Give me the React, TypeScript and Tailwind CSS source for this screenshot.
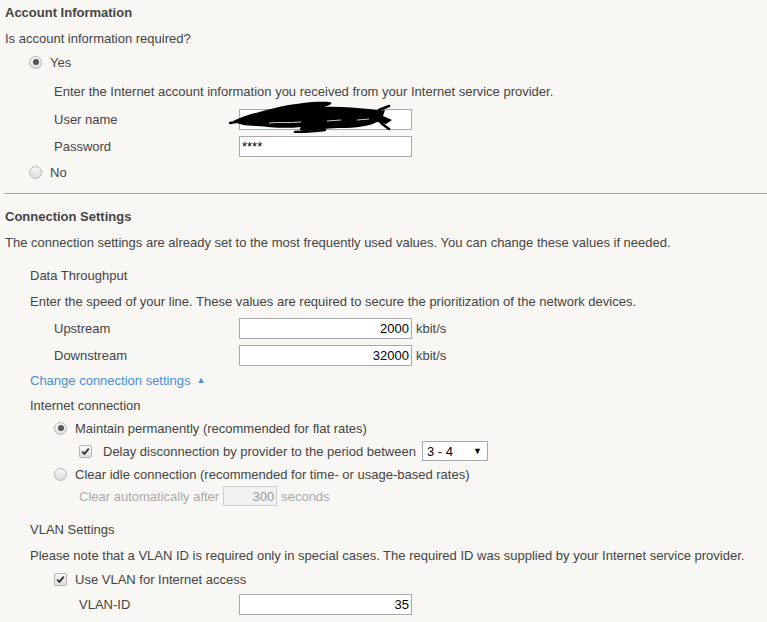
import React from "react";

function Radio({ checked }: { checked?: boolean }) {
  return (
    <span className="flex h-[13px] w-[13px] shrink-0 items-center justify-center rounded-full border border-[#b5b5b5] bg-gradient-to-b from-[#f7f7f7] to-[#dedede]">
      {checked && <span className="h-[6px] w-[6px] rounded-full bg-[#555]" />}
    </span>
  );
}

function Checkbox() {
  return (
    <span className="flex h-[13px] w-[13px] shrink-0 items-center justify-center rounded-[2px] border border-[#b5b5b5] bg-gradient-to-b from-[#f7f7f7] to-[#dedede]">
      <svg width="9" height="9" viewBox="0 0 9 9">
        <path d="M1.2 4.6 L3.4 6.8 L7.8 1.6" fill="none" stroke="#333" strokeWidth="1.8" />
      </svg>
    </span>
  );
}

function Box({
  value,
  right,
  className = "",
}: {
  value: string;
  right?: boolean;
  className?: string;
}) {
  return (
    <div
      className={`flex h-[21px] w-[173px] items-center border border-[#a9a9a9] bg-white px-[2px] text-[13px] text-black ${
        right ? "justify-end" : ""
      } ${className}`}
    >
      {value}
    </div>
  );
}

// redaction scribble over the user name
function Scribble() {
  return (
    <svg
      className="pointer-events-none absolute left-[-10px] top-[-8px]"
      width="166"
      height="32"
      viewBox="0 0 166 32"
    >
      <path
        d="M4 20 C16 14 34 10 50 6 C68 2 88 0 100 1 C106 2 100 5 94 6 C110 5 126 7 140 8 C148 9 152 10 156 9 L154 15 L163 19 L157 23 L148 21 C140 25 128 27 110 27 C96 27 84 30 76 30 C70 30 70 27 72 26 C55 28 40 26 28 25 C16 25 8 23 4 20 Z"
        fill="#000"
      />
      <path
        d="M1 22 C15 20 25 18 35 18 M150 9 L160 5 M152 22 L160 28 M66 31 C80 31 88 30 96 29"
        fill="none"
        stroke="#000"
        strokeWidth="2.5"
        strokeLinecap="round"
      />
      <path
        d="M40 22 C50 21 60 22 72 21 M98 20 L112 19 M128 19 L140 18"
        fill="none"
        stroke="#fff"
        strokeWidth="0.8"
      />
    </svg>
  );
}

export default function App() {
  return (
    <div
      className="h-[622px] w-[767px] overflow-hidden bg-[#f8f7f3] text-[13px] leading-none text-[#444]"
      style={{ fontFamily: '"Liberation Sans", Arial, sans-serif' }}
    >
      {/* Account Information */}
      <div className="mt-[2px] flex h-[20px] items-center pl-[5px] font-bold">Account Information</div>
      <div className="mt-[6px] flex h-[20px] items-center pl-[5px]">Is account information required?</div>
      <div className="mt-[4px] flex h-[20px] items-center gap-[8px] pl-[29px]">
        <Radio checked />
        <span>Yes</span>
      </div>
      <div className="mt-[9px] flex h-[20px] items-center pl-[54px]">
        Enter the Internet account information you received from your Internet service provider.
      </div>
      <div className="mt-[7px] flex h-[22px] items-center pl-[54px]">
        <span className="w-[185px]">User name</span>
        <div className="relative">
          <Box value="" />
          <Scribble />
        </div>
      </div>
      <div className="mt-[5px] flex h-[22px] items-center pl-[54px]">
        <span className="w-[185px]">Password</span>
        <Box value="****" className="text-[11px]" />
      </div>
      <div className="mt-[5px] flex h-[20px] items-center gap-[8px] pl-[29px]">
        <Radio />
        <span>No</span>
      </div>

      <div className="ml-[4px] mt-[11px] h-px bg-[#a0a0a0]" />

      {/* Connection Settings */}
      <div className="mt-[12px] flex h-[20px] items-center pl-[5px] font-bold">Connection Settings</div>
      <div className="mt-[6px] flex h-[20px] items-center pl-[5px]">
        The connection settings are already set to the most frequently used values. You can change these values if needed.
      </div>
      <div className="mt-[13px] flex h-[20px] items-center pl-[30px]">Data Throughput</div>
      <div className="mt-[6px] flex h-[20px] items-center pl-[30px]">
        Enter the speed of your line. These values are required to secure the prioritization of the network devices.
      </div>
      <div className="mt-[6px] flex h-[22px] items-center pl-[54px]">
        <span className="w-[185px]">Upstream</span>
        <Box value="2000" right />
        <span className="ml-[4px]">kbit/s</span>
      </div>
      <div className="mt-[5px] flex h-[22px] items-center pl-[54px]">
        <span className="w-[185px]">Downstream</span>
        <Box value="32000" right />
        <span className="ml-[4px]">kbit/s</span>
      </div>
      <div className="mt-[4px] flex h-[20px] items-center pl-[30px] text-[#4a8fd3]">
        Change connection settings
        <span className="ml-[6px] text-[9px]">▲</span>
      </div>
      <div className="mt-[5px] flex h-[20px] items-center pl-[30px]">Internet connection</div>
      <div className="mt-[3px] flex h-[20px] items-center gap-[8px] pl-[54px]">
        <Radio checked />
        <span>Maintain permanently (recommended for flat rates)</span>
      </div>
      <div className="mt-[3px] flex h-[20px] items-center pl-[79px]">
        <Checkbox />
        <span className="ml-[11px]">Delay disconnection by provider to the period between</span>
        <div className="ml-[6px] flex h-[20px] w-[66px] items-center justify-between border border-[#a9a9a9] bg-white pl-[4px] pr-[5px] text-black">
          <span>3 - 4</span>
          <span className="text-[9px]">▼</span>
        </div>
      </div>
      <div className="mt-[3px] flex h-[20px] items-center gap-[8px] pl-[54px]">
        <Radio />
        <span>Clear idle connection (recommended for time- or usage-based rates)</span>
      </div>
      <div className="mt-[2px] flex h-[20px] items-center pl-[79px] text-[#aaa]">
        <span>Clear automatically after</span>
        <div className="ml-[4px] flex h-[20px] w-[54px] items-center justify-end border border-[#ccc] bg-[#f2f2f2] px-[2px] text-[#999]">
          300
        </div>
        <span className="ml-[4px]">seconds</span>
      </div>

      {/* VLAN */}
      <div className="mt-[13px] flex h-[20px] items-center pl-[30px]">VLAN Settings</div>
      <div className="mt-[6px] flex h-[20px] items-center pl-[30px]">
        Please note that a VLAN ID is required only in special cases. The required ID was supplied by your Internet service provider.
      </div>
      <div className="mt-[4px] flex h-[20px] items-center gap-[8px] pl-[54px]">
        <Checkbox />
        <span>Use VLAN for Internet access</span>
      </div>
      <div className="mt-[4px] flex h-[22px] items-center pl-[79px]">
        <span className="w-[160px]">VLAN-ID</span>
        <Box value="35" right />
      </div>
    </div>
  );
}
